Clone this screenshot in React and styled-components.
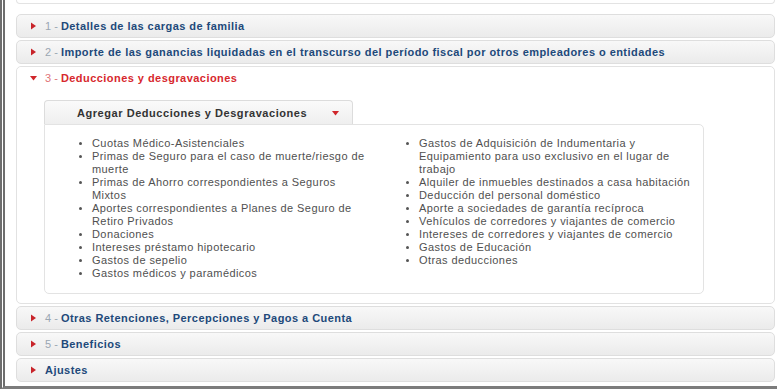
import React from 'react'
import styled, { createGlobalStyle } from 'styled-components'

const GlobalStyle = createGlobalStyle`
    html, body { margin: 0; padding: 0; background: #fff; }
    body { font-family: "Liberation Sans", Arial, sans-serif; }
`

const Frame = styled.div`
    box-sizing: border-box;
    width: 777px;
    height: 389px;
    overflow: hidden;
    border-left: 5px double #6e6e6e;
    border-bottom: 3px solid #7c7c7c;
    padding: 0 2px 0 11px;
    display: flex;
    flex-direction: column;
`

const PrevPanel = styled.div`
    height: 3px;
    border: 1px solid #e3e3e3;
    border-top: none;
    border-radius: 0 0 5px 5px;
    margin-bottom: 10px;
`

const Header = styled.div`
    box-sizing: border-box;
    height: ${p => (p.$open ? '22px' : '24px')};
    margin-top: ${p => (p.$first ? '0' : '2px')};
    display: flex;
    align-items: center;
    padding-left: 13px;
    gap: 8px;
    border: ${p => (p.$open ? 'none' : '1px solid #dedede')};
    border-radius: 5px;
    background: ${p => (p.$open ? '#fff' : 'linear-gradient(#f8f8f8, #ebebeb)')};
    font-size: 11px;
    letter-spacing: 0.45px;
    white-space: nowrap;
`

const Title = styled.span`
    font-weight: bold;
    color: ${p => (p.$open ? '#d7282d' : '#21497a')};
`

const Num = styled.span`
    font-weight: normal;
    letter-spacing: 0;
    color: ${p => (p.$open ? '#e07478' : '#9aa6b2')};
`

const OpenSection = styled.div`
    margin-top: 2px;
    border: 1px solid #e2e2e2;
    border-radius: 5px;
    background: #fff;
`

const Body = styled.div`
    padding: 11px 0 9px 27px;
`

const Tab = styled.div`
    box-sizing: border-box;
    width: 309px;
    height: 24px;
    display: flex;
    align-items: center;
    justify-content: space-between;
    padding: 0 13px 0 32px;
    border: 1px solid #dcdcdc;
    border-bottom: none;
    border-radius: 4px 4px 0 0;
    background: linear-gradient(#fafafa, #efefef);
    font-size: 11px;
    font-weight: bold;
    letter-spacing: 0.55px;
    color: #333;
`

const Panel = styled.div`
    box-sizing: border-box;
    width: 660px;
    border: 1px solid #e3e3e3;
    border-radius: 0 5px 5px 5px;
    display: grid;
    grid-template-columns: 327px 327px;
    padding: 12px 0 13px;
`

const List = styled.ul`
    margin: 0;
    padding: 0 0 0 47px;
    list-style: disc;
    font-size: 11px;
    line-height: 13px;
    letter-spacing: 0.42px;
    color: #505050;
    li::marker { color: #555; font-size: 10px; }
`

const Tri = ({ down }) => (
    <svg width="7" height="8" viewBox="0 0 7 8">
        {down ? <polygon points="0,2 7,2 3.5,6.5" fill="#d0262b" /> : <polygon points="1,0.5 6,4 1,7.5" fill="#c8242a" />}
    </svg>
)

const left = [
    'Cuotas Médico-Asistenciales',
    'Primas de Seguro para el caso de muerte/riesgo de muerte',
    'Primas de Ahorro correspondientes a Seguros Mixtos',
    'Aportes correspondientes a Planes de Seguro de Retiro Privados',
    'Donaciones',
    'Intereses préstamo hipotecario',
    'Gastos de sepelio',
    'Gastos médicos y paramédicos',
]

const right = [
    'Gastos de Adquisición de Indumentaria y Equipamiento para uso exclusivo en el lugar de trabajo',
    'Alquiler de inmuebles destinados a casa habitación',
    'Deducción del personal doméstico',
    'Aporte a sociedades de garantía recíproca',
    'Vehículos de corredores y viajantes de comercio',
    'Intereses de corredores y viajantes de comercio',
    'Gastos de Educación',
    'Otras deducciones',
]

const Closed = ({ num, title, first }) => (
    <Header $first={first}>
        <Tri />
        <Title>
            {num && <Num>{num} - </Num>}
            {title}
        </Title>
    </Header>
)

const App = () => {
    return (
        <>
            <GlobalStyle />
            <Frame>
                <PrevPanel />
                <Closed first num="1" title="Detalles de las cargas de familia" />
                <Closed num="2" title="Importe de las ganancias liquidadas en el transcurso del período fiscal por otros empleadores o entidades" />
                <OpenSection>
                    <Header $open $first>
                        <Tri down />
                        <Title $open>
                            <Num $open>3 - </Num>Deducciones y desgravaciones
                        </Title>
                    </Header>
                    <Body>
                        <Tab>
                            <span>Agregar Deducciones y Desgravaciones</span>
                            <Tri down />
                        </Tab>
                        <Panel>
                            <List>
                                {left.map((item, i) => (
                                    <li key={i}>{item}</li>
                                ))}
                            </List>
                            <List>
                                {right.map((item, i) => (
                                    <li key={i}>{item}</li>
                                ))}
                            </List>
                        </Panel>
                    </Body>
                </OpenSection>
                <Closed num="4" title="Otras Retenciones, Percepciones y Pagos a Cuenta" />
                <Closed num="5" title="Beneficios" />
                <Closed title="Ajustes" />
            </Frame>
        </>
    )
}

export default App
